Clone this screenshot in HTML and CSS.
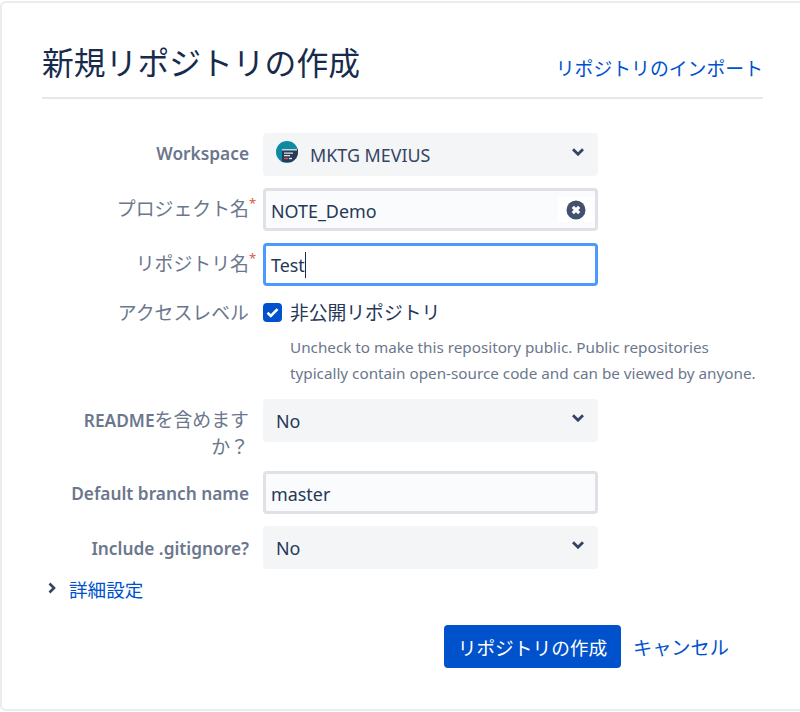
FILE: index.html
```html
<!DOCTYPE html>
<html lang="ja">
<head>
<meta charset="utf-8">
<title>新規リポジトリの作成</title>
<link rel="stylesheet" href="styles.css">
</head>
<body>
<main class="card">
  <header class="head">
    <h1 class="title">新規リポジトリの作成</h1>
    <a class="link import" href="#">リポジトリのインポート</a>
  </header>
  <form class="form">
    <div class="row">
      <label class="label strong">Workspace</label>
      <div class="select">
        <svg class="avatar" viewBox="0 0 22 22" width="22" height="22">
          <circle cx="11" cy="11" r="11" fill="#0f8aa3"/>
          <path d="M6 8h16v3a11 11 0 0 1-7 10H6z" fill="#2b3a55"/>
          <path d="M6 8h15v1.500H6z" fill="#c9d6de"/>
          <path d="M8 11.500h9v1.200H8zM8 14h6v1.200H8z" fill="#dfe6ea"/>
          <path d="M8 16.800h4v1.400H8z" fill="#d9534f"/>
          <path d="M13 16.800h3v1.400h-3z" fill="#dfe6ea"/>
        </svg>
        <span class="value ws">MKTG MEVIUS</span>
        <svg class="chev" viewBox="0 0 12 8" width="12" height="8"><path d="M1 1.200 6 6.200l5-5" fill="none" stroke="#344563" stroke-width="2.800"/></svg>
      </div>
    </div>
    <div class="row">
      <label class="label jp">プロジェクト名<span class="req">*</span></label>
      <div class="input filled">
        <span class="value">NOTE_Demo</span>
        <span class="clear">
          <svg viewBox="0 0 20 20" width="20" height="20"><circle cx="10" cy="10" r="9.500" fill="#42526e"/><path d="M6.800 6.800l6.400 6.400M13.200 6.800l-6.400 6.400" stroke="#fff" stroke-width="3.200"/></svg>
        </span>
      </div>
    </div>
    <div class="row">
      <label class="label jp">リポジトリ名<span class="req">*</span></label>
      <div class="input focus"><span class="value caret">Test</span></div>
    </div>
    <div class="row access">
      <label class="label jp top">アクセスレベル</label>
      <div class="access-body">
        <div class="check-line">
          <svg class="check" viewBox="0 0 19 19" width="19" height="19"><rect width="19" height="19" rx="4" fill="#0052cc"/><path d="M4.500 9.800l3.300 3.200 6.700-6.800" fill="none" stroke="#fff" stroke-width="2.600"/></svg>
          <span class="check-text">非公開リポジトリ</span>
        </div>
        <p class="help">Uncheck to make this repository public. Public repositories<br>typically contain open-source code and can be viewed by anyone.</p>
      </div>
    </div>
    <div class="row">
      <label class="label strong two">README<span class="jp-part">を含めます<br>か？</span></label>
      <div class="select plain">
        <span class="value">No</span>
        <svg class="chev" viewBox="0 0 12 8" width="12" height="8"><path d="M1 1.200 6 6.200l5-5" fill="none" stroke="#344563" stroke-width="2.800"/></svg>
      </div>
    </div>
    <div class="row">
      <label class="label strong low">Default branch name</label>
      <div class="input filled"><span class="value">master</span></div>
    </div>
    <div class="row">
      <label class="label strong low">Include .gitignore?</label>
      <div class="select plain">
        <span class="value">No</span>
        <svg class="chev" viewBox="0 0 12 8" width="12" height="8"><path d="M1 1.200 6 6.200l5-5" fill="none" stroke="#344563" stroke-width="2.800"/></svg>
      </div>
    </div>
    <div class="advanced">
      <svg class="arrow" viewBox="0 0 8 12" width="8" height="12"><path d="M1.500 1.500 6 6l-4.500 4.500" fill="none" stroke="#344563" stroke-width="2.600"/></svg>
      <a class="link adv-link" href="#">詳細設定</a>
    </div>
    <div class="actions">
      <button class="primary" type="button">リポジトリの作成</button>
      <a class="link cancel" href="#">キャンセル</a>
    </div>
  </form>
</main>
</body>
</html>
```

FILE: styles.css
```css
* { box-sizing: border-box; }
html, body { margin: 0; padding: 0; background: #fff; }
body {
  width: 800px;
  height: 712px;
  overflow: hidden;
  font-family: "Noto Sans", "Noto Sans CJK JP", sans-serif;
  font-size: 18px;
  color: #172b4d;
}
.card {
  width: 806px;
  height: 710px;
  margin-top: 1px;
  border: 2px solid #ebecf0;
  border-radius: 6px;
  padding: 0 0 0 40px;
}
.head {
  width: 721px;
  height: 96px;
  border-bottom: 2px solid #e6e7eb;
  display: flex;
  justify-content: space-between;
  align-items: flex-start;
}
.title {
  margin: 36px 0 0;
  font-size: 31.800px;
  line-height: 48px;
  font-weight: 400;
  color: #172b4d;
}
.link { color: #0052cc; text-decoration: none; }
.import { margin-top: 53px; font-size: 18.850px; line-height: 26px; }
.form { padding-top: 34px; }
.row { display: flex; gap: 14px; margin-bottom: 12px; }
.label {
  width: 207px;
  flex: none;
  text-align: right;
  color: #6b778c;
  line-height: 26px;
  padding-top: 8px;
  position: relative;
}
.jp { font-size: 18.900px; padding-top: 8px; }
.top { padding-top: 2px; }
.strong { font-weight: 600; font-size: 17.300px; }
.low { padding-top: 10px; }
.jp-part { font-weight: 400; font-size: 18.900px; }
.two { padding-top: 8px; height: 60px; }
.req { color: #de5a3b; position: absolute; left: 207px; top: 6px; font-size: 13px; line-height: 18px; }
.select, .input {
  width: 335px;
  height: 43px;
  border-radius: 4px;
  display: flex;
  align-items: center;
  flex: none;
  position: relative;
}
.select { background: #f4f5f7; padding: 0 13px; }
.input { border: 3px solid #dfe1e6; background: #fafbfc; padding: 0 5px; }
.filled { padding-top: 3px; }
.input.focus { border-color: #4c9aff; background: #fff; }
.value { font-size: 17.900px; line-height: 26px; color: #253858; }
.ws { margin-left: 12px; color: #344563; }
.avatar { flex: none; margin-top: -6px; }
.chev { position: absolute; right: 14px; top: 15px; }
.clear {
  position: absolute;
  right: 1px;
  top: 6px;
  width: 36px;
  height: 25px;
  background: #fff;
  display: flex;
  align-items: center;
  justify-content: center;
}
.caret { border-right: 1px solid #172b4d; }
.access { margin-bottom: 13px; }
.access-body { flex: none; width: 510px; }
.check-line { display: flex; align-items: center; gap: 8px; height: 28px; margin-top: 1px; }
.check { flex: none; margin-top: -1px; }
.check-text { font-size: 18.800px; line-height: 26px; color: #253858; }
.help { margin: 7px 0 0 27px; font-size: 15.260px; line-height: 26px; color: #6b778c; }
.advanced { display: flex; align-items: center; gap: 13px; padding-left: 6px; height: 26px; margin-top: -6px; }
.adv-link { font-size: 18.600px; }
.arrow { flex: none; }
.actions { display: flex; align-items: center; margin-top: 24px; margin-left: 402px; gap: 12px; }
.primary {
  width: 177px;
  height: 43px;
  border: 0;
  border-radius: 4px;
  background: #0052cc;
  color: #fff;
  font-family: inherit;
  font-size: 18.700px;
  padding: 0;
}
.cancel { font-size: 19.200px; }
```
